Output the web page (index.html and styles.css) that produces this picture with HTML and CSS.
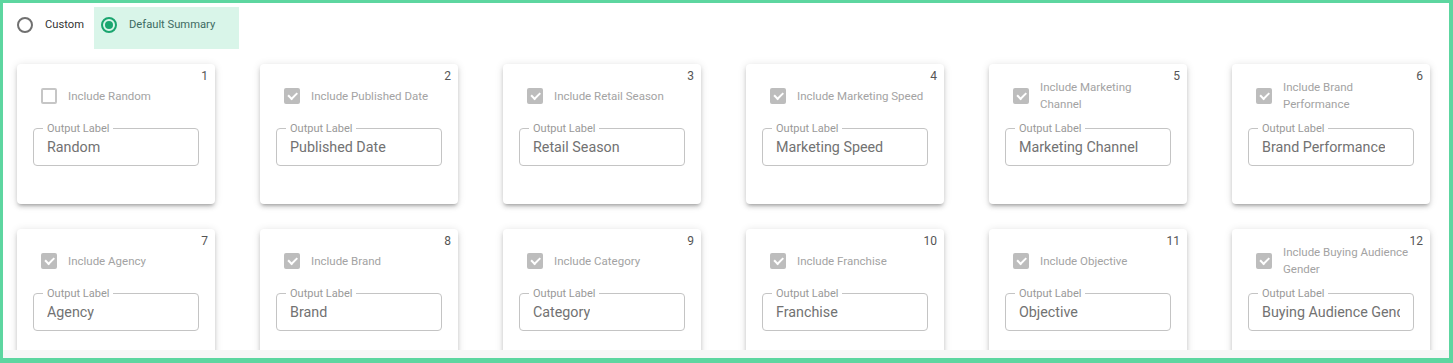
FILE: index.html
```html
<!DOCTYPE html>
<html lang="en">

<head>
    <meta charset="UTF-8">
    <meta name="viewport" content="width=device-width, initial-scale=1.0">
    <title>Summary Fields</title>
    <link rel="stylesheet" href="styles.css">
</head>

<body>
    <div class="frame">
        <div class="viewport">
            <!-- Summary type -->
            <div class="options">
                <label class="option">
                    <span class="radio"></span>
                    <span>Custom</span>
                </label>
                <label class="option selected">
                    <span class="radio"></span>
                    <span>Default Summary</span>
                </label>
            </div>

            <!-- Field cards -->
            <div class="grid">
                <div class="card">
                    <span class="index">1</span>
                    <div class="include">
                        <span class="checkbox"></span>
                        <span class="include-label">Include Random</span>
                    </div>
                    <div class="field"><span class="field-label">Output Label</span><span class="field-value">Random</span></div>
                </div>
                <div class="card">
                    <span class="index">2</span>
                    <div class="include">
                        <span class="checkbox checked"></span>
                        <span class="include-label">Include Published Date</span>
                    </div>
                    <div class="field"><span class="field-label">Output Label</span><span class="field-value">Published Date</span></div>
                </div>
                <div class="card">
                    <span class="index">3</span>
                    <div class="include">
                        <span class="checkbox checked"></span>
                        <span class="include-label">Include Retail Season</span>
                    </div>
                    <div class="field"><span class="field-label">Output Label</span><span class="field-value">Retail Season</span></div>
                </div>
                <div class="card">
                    <span class="index">4</span>
                    <div class="include">
                        <span class="checkbox checked"></span>
                        <span class="include-label">Include Marketing Speed</span>
                    </div>
                    <div class="field"><span class="field-label">Output Label</span><span class="field-value">Marketing Speed</span></div>
                </div>
                <div class="card">
                    <span class="index">5</span>
                    <div class="include">
                        <span class="checkbox checked"></span>
                        <span class="include-label">Include Marketing Channel</span>
                    </div>
                    <div class="field"><span class="field-label">Output Label</span><span class="field-value">Marketing Channel</span></div>
                </div>
                <div class="card">
                    <span class="index">6</span>
                    <div class="include">
                        <span class="checkbox checked"></span>
                        <span class="include-label">Include Brand Performance</span>
                    </div>
                    <div class="field"><span class="field-label">Output Label</span><span class="field-value">Brand Performance</span></div>
                </div>
                <div class="card">
                    <span class="index">7</span>
                    <div class="include">
                        <span class="checkbox checked"></span>
                        <span class="include-label">Include Agency</span>
                    </div>
                    <div class="field"><span class="field-label">Output Label</span><span class="field-value">Agency</span></div>
                </div>
                <div class="card">
                    <span class="index">8</span>
                    <div class="include">
                        <span class="checkbox checked"></span>
                        <span class="include-label">Include Brand</span>
                    </div>
                    <div class="field"><span class="field-label">Output Label</span><span class="field-value">Brand</span></div>
                </div>
                <div class="card">
                    <span class="index">9</span>
                    <div class="include">
                        <span class="checkbox checked"></span>
                        <span class="include-label">Include Category</span>
                    </div>
                    <div class="field"><span class="field-label">Output Label</span><span class="field-value">Category</span></div>
                </div>
                <div class="card">
                    <span class="index">10</span>
                    <div class="include">
                        <span class="checkbox checked"></span>
                        <span class="include-label">Include Franchise</span>
                    </div>
                    <div class="field"><span class="field-label">Output Label</span><span class="field-value">Franchise</span></div>
                </div>
                <div class="card">
                    <span class="index">11</span>
                    <div class="include">
                        <span class="checkbox checked"></span>
                        <span class="include-label">Include Objective</span>
                    </div>
                    <div class="field"><span class="field-label">Output Label</span><span class="field-value">Objective</span></div>
                </div>
                <div class="card">
                    <span class="index">12</span>
                    <div class="include">
                        <span class="checkbox checked"></span>
                        <span class="include-label">Include Buying Audience Gender</span>
                    </div>
                    <div class="field"><span class="field-label">Output Label</span><span class="field-value">Buying Audience Gender</span></div>
                </div>
            </div>
        </div>
        <div class="strip"></div>
    </div>
</body>

</html>
```

FILE: styles.css
```css
body {
    margin: 0;
    font-family: Roboto, "Liberation Sans", Arial, sans-serif;
    background: #fff;
}

/* Outer frame */
.frame {
    height: 363px;
    box-sizing: border-box;
    border: 3px solid #5dd6a0;
    border-right-width: 4px;
    border-bottom-width: 5px;
    display: flex;
    flex-direction: column;
}

.viewport {
    flex: 1;
    overflow: hidden;
}

.strip {
    height: 8px;
    background: #f7f7f7;
}

/* Radio options */
.options {
    display: flex;
    align-items: flex-start;
    padding: 4px 0 0 14px;
}

.option {
    display: flex;
    align-items: center;
    gap: 12px;
    height: 42px;
    box-sizing: border-box;
    padding-bottom: 7px;
    font-size: 11.2px;
    color: #333;
    margin-right: 10px;
}

.option.selected {
    background: #d9f5e9;
    padding: 0 24px 7px 7px;
    color: #3d6b62;
}

.radio {
    width: 16px;
    height: 16px;
    box-sizing: border-box;
    border: 2px solid #707070;
    border-radius: 50%;
    display: flex;
    align-items: center;
    justify-content: center;
}

.option.selected .radio {
    border-color: #1aa56f;
}

.option.selected .radio::after {
    content: "";
    width: 8px;
    height: 8px;
    border-radius: 50%;
    background: #1aa56f;
}

/* Cards */
.grid {
    display: grid;
    grid-template-columns: repeat(6, 198px);
    column-gap: 45px;
    row-gap: 25px;
    padding: 15px 0 0 14px;
}

.card {
    position: relative;
    height: 140px;
    box-sizing: border-box;
    padding: 15px 16px 0;
    background: #fff;
    border-radius: 4px;
    box-shadow: 0 3px 3px -2px rgba(0, 0, 0, 0.2), 0 3px 4px 0 rgba(0, 0, 0, 0.14), 0 1px 8px 0 rgba(0, 0, 0, 0.12);
}

.index {
    position: absolute;
    top: 5px;
    right: 7px;
    font-size: 12px;
    color: #555;
}

.include {
    display: flex;
    align-items: center;
    height: 34px;
    padding-left: 8px;
}

.checkbox {
    flex: none;
    width: 16px;
    height: 16px;
    box-sizing: border-box;
    border: 2px solid #c6c6c6;
    border-radius: 2px;
    margin-right: 11px;
    display: flex;
    align-items: center;
    justify-content: center;
}

.checkbox.checked {
    background: #bdbdbd;
    border-color: #bdbdbd;
}

.checkbox.checked::after {
    content: "";
    width: 7px;
    height: 3.5px;
    border-left: 2px solid #fff;
    border-bottom: 2px solid #fff;
    transform: translateY(-1px) rotate(-45deg);
}

.include-label {
    font-size: 11.5px;
    line-height: 17px;
    color: #a3a3a3;
}

.field {
    position: relative;
    margin-top: 15px;
    height: 38px;
    box-sizing: border-box;
    border: 1px solid #c4c4c4;
    border-radius: 4px;
    padding: 0 13px;
    display: flex;
    align-items: center;
}

.field-label {
    position: absolute;
    top: -7px;
    left: 9px;
    padding: 0 4px;
    background: #fff;
    font-size: 11px;
    line-height: 13px;
    color: #999;
}

.field-value {
    font-size: 14.3px;
    color: #727272;
    white-space: nowrap;
    overflow: hidden;
}
```
